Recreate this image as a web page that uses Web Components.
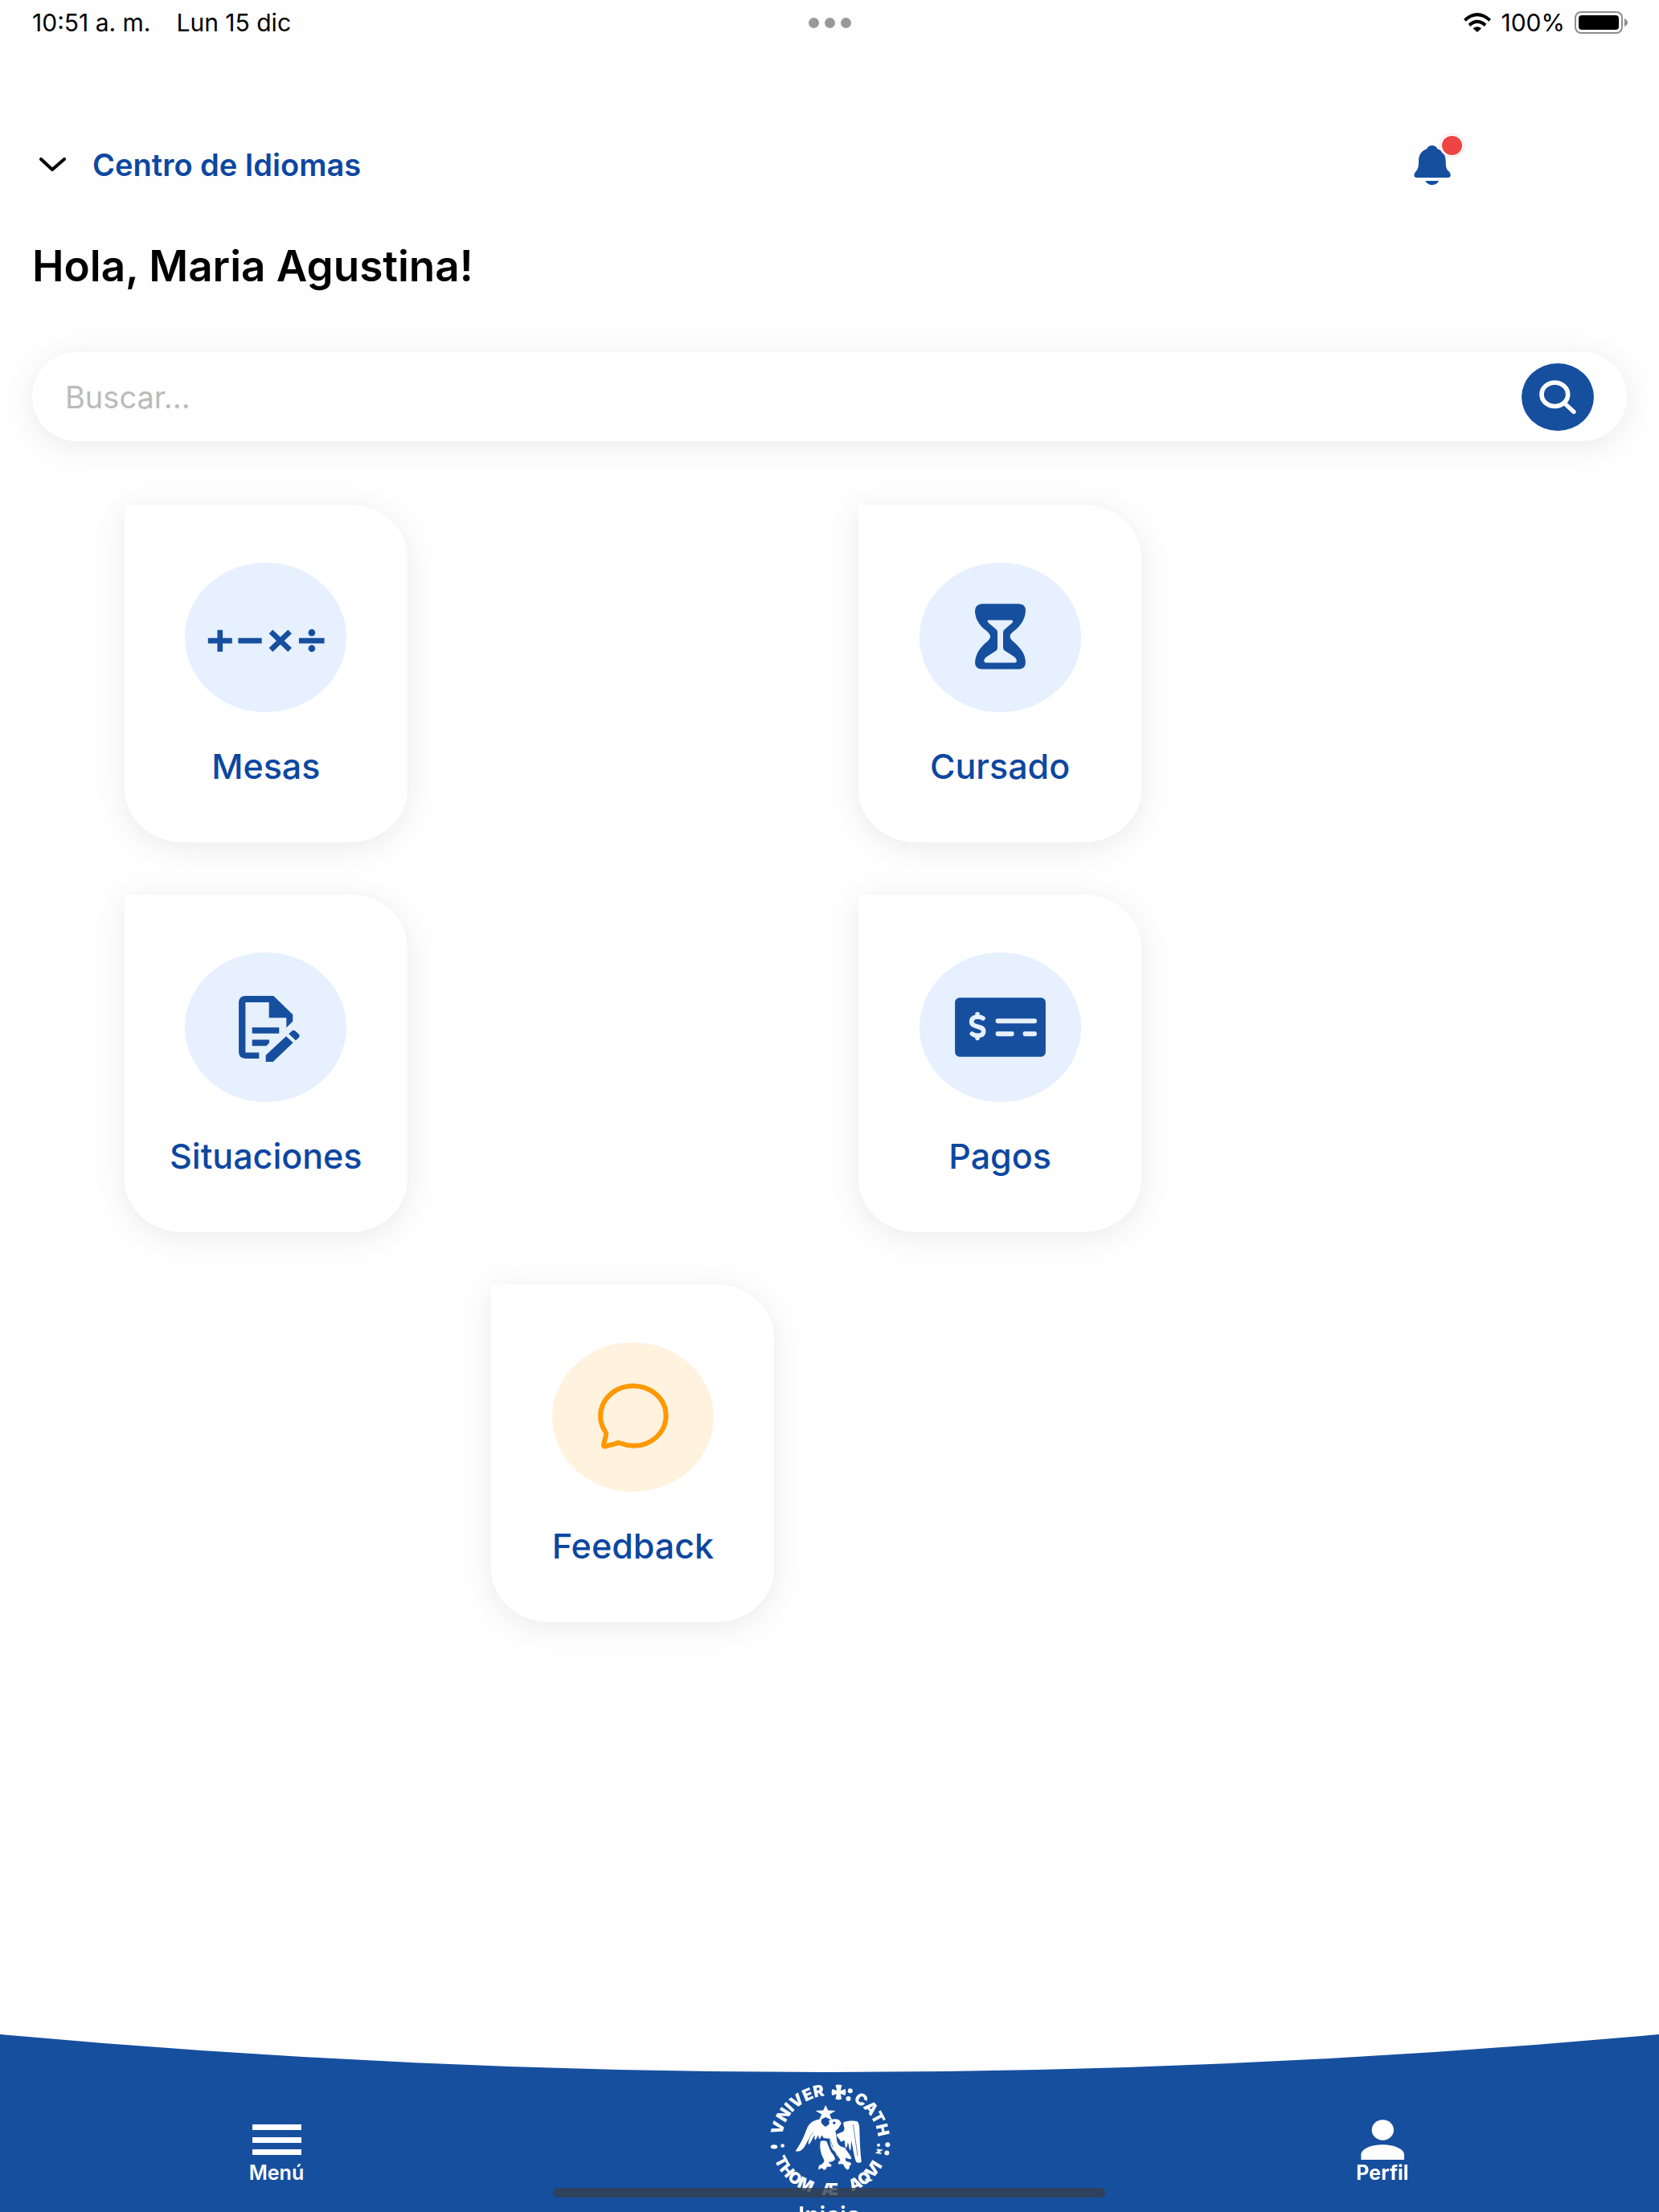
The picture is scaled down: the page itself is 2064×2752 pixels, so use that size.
<!DOCTYPE html>
<html lang="es">
<head>
<meta charset="utf-8">
<meta name="viewport" content="width=device-width, initial-scale=1">
<title>Inicio</title>
<style>
    body {
        --brand: #174f9f;
        --label: #0d47a1;
        --surface: #ffffff;
        --shadow: 0 6px 36px rgba(0, 0, 0, 0.08);
        margin: 0;
        background: #fefefe;
        color: #000000;
        font-family: Inter, "Liberation Sans", sans-serif;
    }
</style>
</head>
<body>

<template id="template-status">
    <style>
        :host {
            display: grid;
            grid-template-columns: 1fr auto 1fr;
            align-items: center;
            height: 56px;
            padding: 0 39px 0 40px;
            font-size: 30px;
            line-height: 32px;
        }

        .clock, .system {
            display: flex;
            align-items: center;
        }

        .clock {
            gap: 32px;
        }

        .system {
            justify-content: flex-end;
            gap: 12px;
        }

        .dots {
            display: flex;
            gap: 7px;
        }

        .dots i {
            width: 13px;
            height: 13px;
            border-radius: 50%;
            background: #999999;
        }

        svg {
            display: block;
        }
    </style>
    <div class="clock"><span>10:51 a. m.</span><span>Lun 15 dic</span></div>
    <div class="dots"><i></i><i></i><i></i></div>
    <div class="system">
        <svg width="34" height="24" viewBox="365 48 103 70" preserveAspectRatio="none" aria-hidden="true">
            <g fill="none" stroke="#000" stroke-width="12">
                <path d="M369 75Q416 34 464 75"/>
                <path d="M386 93Q416 67 447 93"/>
            </g>
            <path d="M400 104Q416 92 432 104L416 118Z"/>
        </svg>
        <span>100%</span>
        <svg width="66" height="28" viewBox="0 0 66 28" aria-hidden="true">
            <rect x="1" y="1" width="58" height="26" rx="7" fill="none" stroke="#8e8e8e" stroke-width="2"/>
            <rect x="5" y="5" width="50" height="18" rx="4"/>
            <path d="M62 9q4 2 4 5t-4 5z" fill="#8e8e8e"/>
        </svg>
    </div>
</template>

<template id="template-header">
    <style>
        :host {
            display: block;
            padding: 104px 40px 0;
        }

        .bar {
            display: flex;
            justify-content: space-between;
            align-items: center;
            height: 90px;
            padding-right: 219px;
        }

        button {
            display: flex;
            align-items: center;
            border: 0;
            padding: 0;
            background: none;
            font: inherit;
        }

        .campus {
            gap: 32px;
            padding-left: 8px;
            color: var(--label);
            font-size: 38px;
            font-weight: 600;
            line-height: 44px;
        }

        .bell {
            position: relative;
        }

        .bell::after {
            content: '';
            position: absolute;
            top: -14px;
            left: 33px;
            width: 25px;
            height: 24px;
            border: 2px solid #fefefe;
            border-radius: 50%;
            background: #ef4444;
            box-shadow: 0 0 0 1px #fbdcdc;
        }

        h1 {
            margin: 47px 0 0;
            font-size: 53px;
            font-weight: 600;
            line-height: 68px;
        }
    </style>
    <div class="bar">
        <button class="campus">
            <svg width="35" height="18" viewBox="0 0 35 18" fill="none" stroke="#000" stroke-width="4" stroke-linecap="round" stroke-linejoin="round" aria-hidden="true"><path d="M3 2l14 13L32 2"/></svg>
            <slot name="campus"></slot>
        </button>
        <button class="bell" aria-label="Notificaciones">
            <svg width="46" height="49" viewBox="178 542 138 147" fill="#174f9f" aria-hidden="true">
                <path d="M246 542c11 0 17 5 20 13 20 7 31 22 31 45 0 20 2 30 9 36 6 6 9 11 9 17s-4 9-10 9H189c-7 0-10-4-10-9s3-11 8-16c7-7 9-17 9-37 0-23 11-38 30-45 3-8 9-13 20-13z"/>
                <path d="M221 674h50c-5 10-13 15-25 15s-20-5-25-15z"/>
            </svg>
        </button>
    </div>
    <h1><slot></slot></h1>
</template>

<template id="template-search">
    <style>
        :host {
            display: block;
            margin: 73px 40px 0;
        }

        form {
            display: flex;
            align-items: center;
            gap: 20px;
            height: 111px;
            box-sizing: border-box;
            padding: 0 41px;
            border-radius: 56px;
            background: var(--surface);
            box-shadow: var(--shadow);
        }

        input {
            flex: 1;
            min-width: 0;
            border: 0;
            padding: 0;
            outline: 0;
            background: none;
            font: inherit;
            font-size: 38px;
            line-height: 48px;
        }

        input::placeholder {
            color: #bbbbbb;
            opacity: 1;
        }

        button {
            display: grid;
            place-items: center;
            width: 90px;
            height: 84px;
            border: 0;
            padding: 0;
            border-radius: 50%;
            background: var(--brand);
        }
    </style>
    <form role="search">
        <input type="search" placeholder="Buscar..." aria-label="Buscar">
        <button type="button" aria-label="Buscar">
            <svg width="46" height="42" viewBox="345 191 138 128" preserveAspectRatio="none" fill="none" stroke="#fff" aria-hidden="true">
                <ellipse cx="403" cy="245" rx="49" ry="45" stroke-width="17"/>
                <path d="M440 279l34 32" stroke-width="16" stroke-linecap="round"/>
            </svg>
        </button>
    </form>
</template>

<template id="template-tiles">
    <style>
        :host {
            display: grid;
            grid-template-columns: auto auto;
            justify-content: space-between;
            row-gap: 65px;
            /* the grid leaves the right part of a wide screen free */
            margin: 79px 31.2% 96px 7.5%;
        }
    </style>
    <slot></slot>
</template>

<template id="template-tile">
    <style>
        :host {
            --tint: #e6f0ff;
            display: block;
        }

        :host([accent]) {
            --tint: #fff2df;
            grid-column: 1 / -1;
            justify-self: center;
        }

        a {
            display: flex;
            flex-direction: column;
            align-items: center;
            gap: 41px;
            box-sizing: border-box;
            width: 352px;
            padding: 72px 16px 69px;
            border-radius: 0 72px 72px 72px / 0 66px 66px 66px;
            background: var(--surface);
            box-shadow: var(--shadow);
            color: var(--label);
            font-size: 43px;
            font-weight: 500;
            line-height: 52px;
            text-decoration: none;
        }

        .icon {
            width: 201px;
            height: 186px;
            border-radius: 50%;
            background: var(--tint);
        }
    </style>
    <a href="#">
        <div class="icon"><slot name="icon"></slot></div>
        <span><slot></slot></span>
    </a>
</template>

<template id="template-nav">
    <style>
        :host {
            position: fixed;
            right: 0;
            bottom: 0;
            left: 0;
            height: 221px;
            overflow: hidden;
        }

        .curve {
            display: block;
            width: 100%;
            height: 48px;
            margin-bottom: -1px;
        }

        nav {
            display: grid;
            grid-template-columns: repeat(3, 1fr);
            height: 174px;
            background: var(--brand);
        }

        .home-indicator {
            position: absolute;
            bottom: 18px;
            left: 50%;
            width: 33.3%;
            height: 12px;
            border-radius: 6px;
            background: rgba(52, 62, 76, 0.8);
            transform: translateX(-50%);
        }
    </style>
    <svg class="curve" viewBox="0 0 100 48" preserveAspectRatio="none" aria-hidden="true"><path d="M0 0Q50 94 100 0V48H0Z" fill="#174f9f"/></svg>
    <nav><slot></slot></nav>
    <div class="home-indicator"></div>
</template>

<template id="template-nav-item">
    <style>
        :host {
            display: block;
            padding-top: 59px;
        }

        :host([home]) {
            --size: 30px;
            padding-top: 14px;
        }

        :host([strong]) {
            --weight: 700;
        }

        a {
            display: flex;
            flex-direction: column;
            align-items: center;
            color: #ffffff;
            font-size: var(--size, 25px);
            font-weight: var(--weight, 600);
            line-height: 32px;
            text-decoration: none;
        }
    </style>
    <a href="#"><slot name="icon"></slot><span><slot></slot></span></a>
</template>

<template id="template-seal">
    <style>
        :host {
            display: block;
            height: 148px;
        }

        svg {
            overflow: visible;
        }

        text {
            font: 900 60px Inter, sans-serif;
            fill: #ffffff;
            text-anchor: middle;
        }
    </style>
    <svg width="153" height="142" viewBox="75 65 460 427" fill="#fff" role="img" aria-label="Universidad Católica">
        <defs>
            <path id="top" d="M125 278A180 167 0 0 1 485 278"/>
            <path id="bottom" d="M83 278A222 206 0 0 0 527 278"/>
        </defs>
        <text><textPath href="#top" startOffset="25%">VNIVER</textPath></text>
        <text><textPath href="#top" startOffset="82%">CATH</textPath></text>
        <text><textPath href="#bottom" startOffset="25%">THOM</textPath></text>
        <text><textPath href="#bottom" startOffset="50%">Æ</textPath></text>
        <text><textPath href="#bottom" startOffset="74%">AQVI</textPath></text>
        <!-- cross pattée and the separators -->
        <path d="M326 71q12-4 24 1l-5 20 18-6q4 11-1 24l-17-6 4 20q-12 5-23 0l4-19-17 5q-4-12 1-24l17 6z"/>
        <g>
            <circle cx="381" cy="93" r="9"/><circle cx="374" cy="122" r="9"/>
            <circle cx="521" cy="294" r="9"/><circle cx="518" cy="325" r="9"/>
            <circle cx="128" cy="298" r="7"/><ellipse cx="96" cy="302" rx="13" ry="8"/>
            <circle cx="487" cy="296" r="6"/>
        </g>
        <path d="M480 313l16 2-14 9 15 3" fill="none" stroke="#fff" stroke-width="6"/>
        <!-- star -->
        <path d="M289 146l9 20 28 1-22 14 10 23-25-13-25 13 10-23-23-14 29-1z"/>
        <!-- eagle -->
        <path d="M274 198c-28 2-47 15-55 36-10 27-20 51-43 84 18 5 28-7 35-18 12-19 18-38 34-56-9 15-23 31-20 50 10-6 14-26 24-36-1 9-3 15 1 19 6-4 6-13 12-19 0 8 1 12 5 15 5-4 4-10 9-14 2 8 6 12 12 11l15 2c4 22 6 40 22 49 5 15 15 19 19 31-8 4-10 13-6 16 8-3 15-1 17 0 4 9 9 18 16 20 6-2 9-8 7-15 6-1 8-5 5-11-7-4-16-3-19-8l-1-11c10 3 16 8 23 3-4-15-18-27-24-40-9-3-19-4-26-14-9-15-4-34-11-49 10-5 17-17 23-29l-9-13c-15-5-24-4-38 3l2 12-12 11c-8-2-16-10-19-18z"/>
        <path d="M270 281c8-3 16-2 23 1 5 12 8 23 15 36 4 9 12 12 17 30-8 10-14 12-24 10-2 8 10 7 10 15-3 6-10 3-17 3-2 8-5 13-13 12-4-9-12-6-18 0-3-7 1-13 4-18 9-2 16-8 17-17-13-24-19-46-14-72z"/>
        <path d="M356 210c18-6 37-6 51-3 8 7 9 23 9 42 1 38 3 77 7 110-6 4-14 3-20 0-10-28-11-53-18-78-2 13 0 25-3 35-7-6-5-20-10-31-1 9-2 18-7 22-5-8-2-18-6-29-5 1-9 7-14 4-4-10-12-12-15-25 9-9 22-6 28-17 5-10-5-18-2-30z"/>
        <circle cx="321" cy="213" r="5" fill="#174f9f"/>
        <path d="M303 270l14 36M392 219l17 118" fill="none" stroke="#174f9f" stroke-width="2"/>
    </svg>
</template>

<app-status></app-status>
<app-header>
    <span slot="campus">Centro de Idiomas</span>
    Hola, Maria Agustina!
</app-header>
<app-search></app-search>

<app-tiles>
    <app-tile>
        <svg slot="icon" width="201" height="186" viewBox="271 269 603 559" fill="none" stroke="#174f9f" stroke-width="20" aria-hidden="true">
            <path d="M357 561h90M402 521v81M470 561h88M592 527l71 68M663 527l-71 68M697 561h95"/>
            <g fill="#174f9f" stroke="none"><circle cx="745" cy="531" r="13"/><circle cx="745" cy="590" r="13"/></g>
        </svg>
        Mesas
    </app-tile>
    <app-tile>
        <svg slot="icon" width="201" height="186" viewBox="279 269 603 559" aria-hidden="true">
            <path fill="#174f9f" fill-rule="evenodd" d="M512 423H650q25 2 25 25c-1 25-10 45-30 65-12 12-28 19-28 32s17 22 28 34c20 20 30 40 30 65q-2 22-23 23H509q-22-2-23-23c1-25 10-45 29-65 13-13 28-21 28-34s-17-21-29-33c-18-19-28-39-28-64q1-23 26-25zM539 484c-8 0-8 5-3 10l30 25q4 4 4 10v59q0 6-5 10l-34 22c-9 6-12 12-11 18q1 5 7 5H634q7 0 8-6c0-7-5-13-12-18l-34-22q-5-4-5-10v-57q0-6 5-11l28-24c6-6 4-11-3-11z"/>
        </svg>
        Cursado
    </app-tile>
    <app-tile>
        <svg slot="icon" width="201" height="186" viewBox="271 254 603 559" fill="#174f9f" aria-hidden="true">
            <path d="M495 416H602L674 486V512L650 535V498H585V440H497V628H548V651H497Q472 649 472 627V440Q473 418 495 416z"/>
            <path d="M522 534H623V557H522zM522 580H586V592L575 603H522z"/>
            <path d="M573 638L649 567L675 591L600 663H573zM659 558L671 547Q677 542 683 547L697 560Q702 566 697 572L685 583z"/>
        </svg>
        Situaciones
    </app-tile>
    <app-tile>
        <svg slot="icon" width="201" height="186" viewBox="279 254 603 559" aria-hidden="true">
            <rect x="411" y="423" width="339" height="221" rx="17" fill="#174f9f"/>
            <g fill="#e6f0ff">
                <rect x="563" y="501" width="154" height="18" rx="7"/>
                <rect x="563" y="549" width="69" height="18" rx="7"/>
                <rect x="665" y="549" width="52" height="18" rx="7"/>
            </g>
            <path d="M495 485v10M495 565v9M516 500c-12-7-43-10-43 13 0 24 45 12 45 35 0 22-31 19-43 10" fill="none" stroke="#e6f0ff" stroke-width="17" stroke-linecap="round"/>
        </svg>
        Pagos
    </app-tile>
    <app-tile accent>
        <svg slot="icon" width="201" height="186" viewBox="258 269 603 559" fill="none" stroke="#ff9800" stroke-width="18" stroke-linejoin="round" aria-hidden="true">
            <path d="M560 432C626 432 683 480 683 543S628 656 563 656C542 656 522 650 514 647Q505 643 497 647L457 658Q448 660 450 651L459 615Q460 608 455 601C444 585 438 566 438 545C438 480 494 432 560 432Z"/>
        </svg>
        Feedback
    </app-tile>
</app-tiles>

<app-nav>
    <app-nav-item>
        <svg slot="icon" width="61" height="50" viewBox="0 0 61 50" fill="#fff" aria-hidden="true"><path d="M0 6h61v7H0zM0 22h61v7H0zM0 37h61v7H0z"/></svg>
        Menú
    </app-nav-item>
    <app-nav-item home>
        <app-seal slot="icon"></app-seal>
        Inicio
    </app-nav-item>
    <app-nav-item strong>
        <svg slot="icon" width="54" height="50" viewBox="1056 410 162 150" fill="#fff" aria-hidden="true"><ellipse cx="1138" cy="449" rx="41" ry="38"/><path d="M1057 560V540C1059 519 1095 504 1137 504S1216 519 1218 540V560z"/></svg>
        Perfil
    </app-nav-item>
</app-nav>

<script>
    const define = (name, id) => customElements.define(name, class extends HTMLElement {
        constructor() {
            super();
            const template = document.getElementById(id).content;
            this.shadow = this.attachShadow({ mode: 'open' });
            this.shadow.appendChild(template.cloneNode(true));
        }
    });

    define('app-status', 'template-status');
    define('app-header', 'template-header');
    define('app-search', 'template-search');
    define('app-tiles', 'template-tiles');
    define('app-tile', 'template-tile');
    define('app-nav', 'template-nav');
    define('app-nav-item', 'template-nav-item');
    define('app-seal', 'template-seal');
</script>
</body>
</html>
